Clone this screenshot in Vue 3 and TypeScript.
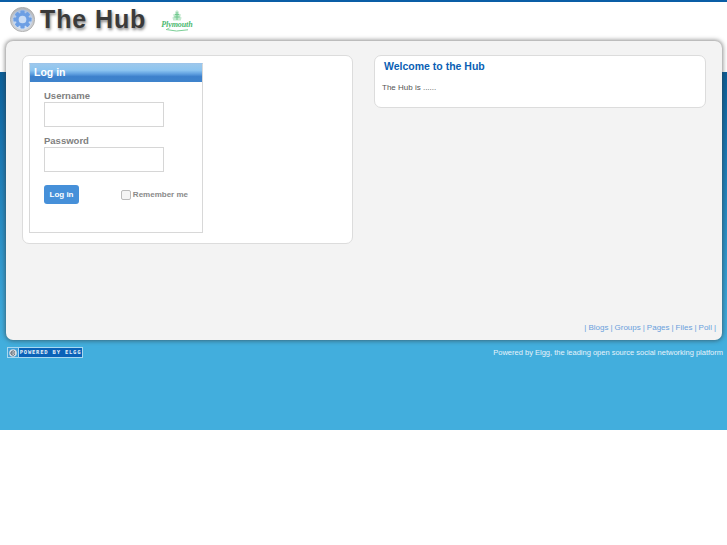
<template>
  <div class="page">
    <header class="topbar">
      <svg class="topbar__gear" width="25" height="25" viewBox="0 0 26 26">
        <defs>
          <linearGradient id="discFill" x1="0" y1="0" x2="0" y2="1">
            <stop offset="0" stop-color="#b4b7bb" />
            <stop offset="1" stop-color="#d4d6d9" />
          </linearGradient>
          <linearGradient id="glassFill" x1="0" y1="0" x2="0" y2="1">
            <stop offset="0" stop-color="#a9bfdf" />
            <stop offset="1" stop-color="#d3e2f6" />
          </linearGradient>
        </defs>
        <circle cx="13" cy="13" r="12.6" fill="url(#discFill)" stroke="#a3a3a3" stroke-width="0.8" />
        <circle cx="13" cy="13" r="10.4" fill="url(#glassFill)" />
        <g fill="#6d9fe4">
          <rect v-for="angle in gearTeeth" :key="angle" x="10.8" y="3.6" width="4.4" height="18.8" rx="1" :transform="`rotate(${angle} 13 13)`" />
        </g>
        <circle cx="13" cy="13" r="7" fill="#6d9fe4" />
        <circle cx="13" cy="13" r="4" fill="#c9dcf5" />
      </svg>
      <span class="topbar__title">The Hub</span>
      <div class="topbar__crest">
        <svg class="topbar__crest-mark" width="10" height="11" viewBox="0 0 10 11">
          <path d="M5 0 L7 2 L6.6 3.4 L9 4.4 L8.2 6.6 L9.6 7.6 L8.8 10.6 L1.2 10.6 L0.4 7.6 L1.8 6.6 L1 4.4 L3.4 3.4 L3 2 Z" fill="#c4e9d0" />
          <path d="M3 4.6 H7 M2.4 7 H7.6 M5 2 V10" stroke="#6cc78b" stroke-width="1" fill="none" />
        </svg>
        <span class="topbar__crest-name">Plymouth</span>
        <svg class="topbar__crest-swoosh" width="30" height="3" viewBox="0 0 30 3">
          <path d="M4 0.5 Q14 3.4 26 0.8" stroke="#7ccf97" stroke-width="1" fill="none" />
        </svg>
      </div>
    </header>

    <div class="band">
      <main class="sheet">
        <div class="columns">
          <section class="panel panel--login">
            <div class="login">
              <h2 class="login__title">Log in</h2>
              <form class="login__form" @submit.prevent>
                <label class="login__label">Username</label>
                <input class="login__input" type="text" />
                <label class="login__label login__label--second">Password</label>
                <input class="login__input" type="password" />
                <div class="login__actions">
                  <button class="login__button" type="submit">Log in</button>
                  <label class="login__remember">
                    <span class="login__check"></span>
                    Remember me
                  </label>
                </div>
              </form>
            </div>
          </section>

          <section class="panel panel--welcome">
            <h2 class="welcome__title">Welcome to the Hub</h2>
            <p class="welcome__text">The Hub is ......</p>
          </section>
        </div>

        <nav class="links">
          <span>|</span>
          <template v-for="link in links" :key="link">
            <a class="links__item">{{ link }}</a>
            <span>|</span>
          </template>
        </nav>
      </main>

      <footer class="foot">
        <div class="badge">
          <span class="badge__icon">
            <svg width="8" height="8" viewBox="0 0 9 9">
              <circle cx="4.5" cy="4.5" r="4.3" fill="#d8dde2" />
              <path d="M6.5 3.2 A2.4 2.4 0 1 0 6.6 5.8 M2.4 4.5 H6.6" fill="none" stroke="#4a5560" stroke-width="1" />
            </svg>
          </span>
          <span class="badge__text">POWERED BY ELGG</span>
        </div>
        <span class="foot__text">Powered by Elgg, the leading open source social networking platform</span>
      </footer>
    </div>
  </div>
</template>

<script setup lang="ts">
const links: string[] = ['Blogs', 'Groups', 'Pages', 'Files', 'Poll']
const gearTeeth: number[] = [0, 45, 90, 135]
</script>

<style>
  body {
    background: #fff;
  }
</style>

<style scoped>
  .page {
    font-family: "Liberation Sans", Arial, sans-serif;
    color: #333;
  }
  .topbar {
    box-sizing: border-box;
    height: 72px;
    border-top: 2px solid #0a5ea6;
    padding: 5px 0 0 10px;
    display: flex;
    align-items: flex-start;
    background: #fff;
  }
  .topbar__title {
    margin: -4px 0 0 5px;
    font-size: 25px;
    line-height: 32px;
    font-weight: 700;
    letter-spacing: 0.9px;
    color: #3a3a3a;
    text-shadow: 1px 2px 3px #888;
  }
  .topbar__crest {
    margin: 3px 0 0 15px;
    display: flex;
    flex-direction: column;
    align-items: center;
    color: #4cb96f;
  }
  .topbar__crest-name {
    font-family: "Liberation Serif", serif;
    font-style: italic;
    font-weight: 700;
    font-size: 8px;
    line-height: 8px;
    letter-spacing: -0.1px;
  }
  .topbar__crest-mark,
  .topbar__crest-swoosh {
    display: block;
  }
  .band {
    display: flow-root;
    height: 358px;
    box-sizing: border-box;
    background: linear-gradient(#0b5f9a 0, #1a78b4 80px, #3aa5d8 230px, #42aedd 270px);
  }
  .sheet {
    box-sizing: border-box;
    margin: -31px 5px 0 6px;
    height: 299px;
    padding: 14px 16px 0;
    background: #f3f3f3;
    border-radius: 7px;
    box-shadow: 0 0 4px 1px rgba(50, 50, 50, 0.55);
    display: flex;
    flex-direction: column;
  }
  .columns {
    display: flex;
    justify-content: space-between;
    align-items: flex-start;
    flex: 1;
  }
  .panel {
    box-sizing: border-box;
    background: #fff;
    border: 1px solid #dcdcdc;
    border-radius: 7px;
  }
  .panel--login {
    width: 331px;
    height: 189px;
    padding: 7px 6px;
  }
  .panel--welcome {
    width: 332px;
    height: 53px;
    padding: 3px 7px;
  }
  .login {
    box-sizing: border-box;
    width: 174px;
    height: 170px;
    border: 1px solid #d8d8d8;
    border-top-color: #9cc4ea;
  }
  .login__title {
    margin: 0;
    height: 18px;
    padding-left: 4px;
    font-size: 10.5px;
    line-height: 16px;
    font-weight: 700;
    color: #fff;
    background: linear-gradient(#9cc8ec 0, #8cc4f0 35%, #60a0e0 55%, #3d80cc 70%, #3f84cc 100%);
  }
  .login__form {
    padding: 7px 14px 0;
    display: flex;
    flex-direction: column;
    align-items: flex-start;
  }
  .login__label {
    font-size: 9.5px;
    line-height: 13px;
    font-weight: 700;
    color: #808080;
  }
  .login__label--second {
    margin-top: 7px;
  }
  .login__input {
    box-sizing: border-box;
    display: block;
    width: 120px;
    height: 25px;
    margin: 0;
    padding: 0;
    background: #fff;
    border: 1px solid #d6d6d6;
  }
  .login__actions {
    margin-top: 13px;
    width: 144px;
    display: flex;
    justify-content: space-between;
    align-items: center;
  }
  .login__button {
    box-sizing: border-box;
    width: 35px;
    height: 19px;
    padding: 0;
    border: none;
    border-radius: 3px;
    background: #4690d9;
    color: #fff;
    font-family: inherit;
    font-size: 8px;
    font-weight: 700;
  }
  .login__remember {
    display: flex;
    align-items: center;
    gap: 2px;
    font-size: 8px;
    font-weight: 700;
    color: #8a8a8a;
  }
  .login__check {
    box-sizing: border-box;
    width: 10px;
    height: 10px;
    border: 1px solid #bbb;
    border-radius: 2px;
    background: #f4f4f4;
  }
  .welcome__title {
    margin: 0 0 0 2px;
    font-size: 10.5px;
    line-height: 14px;
    font-weight: 700;
    color: #0a5fb4;
  }
  .welcome__text {
    margin: 9px 0 0;
    font-size: 8px;
    line-height: 12px;
    color: #555;
  }
  .links {
    display: flex;
    justify-content: flex-end;
    gap: 2px;
    margin: 0 -10px 6px 0;
    font-size: 8px;
    line-height: 12px;
    color: #6a9fdc;
  }
  .foot {
    display: flex;
    justify-content: space-between;
    align-items: center;
    margin: 7px 4px 0 7px;
  }
  .badge {
    display: flex;
    height: 11px;
    width: 76px;
    box-sizing: border-box;
    border: 1px solid #a8d8f0;
    background: #0a62b8;
  }
  .badge__icon {
    width: 10px;
    display: flex;
    align-items: center;
    justify-content: center;
    background: #3f9fd8;
    border-right: 1px solid #a8d8f0;
  }
  .badge__text {
    flex: 1;
    font-family: "DejaVu Sans Mono", monospace;
    font-size: 5.5px;
    font-weight: 700;
    line-height: 9px;
    letter-spacing: 0.8px;
    text-align: center;
    white-space: nowrap;
    color: #e2eff9;
  }
  .foot__text {
    font-size: 7.5px;
    color: #e6f3fb;
  }
</style>
